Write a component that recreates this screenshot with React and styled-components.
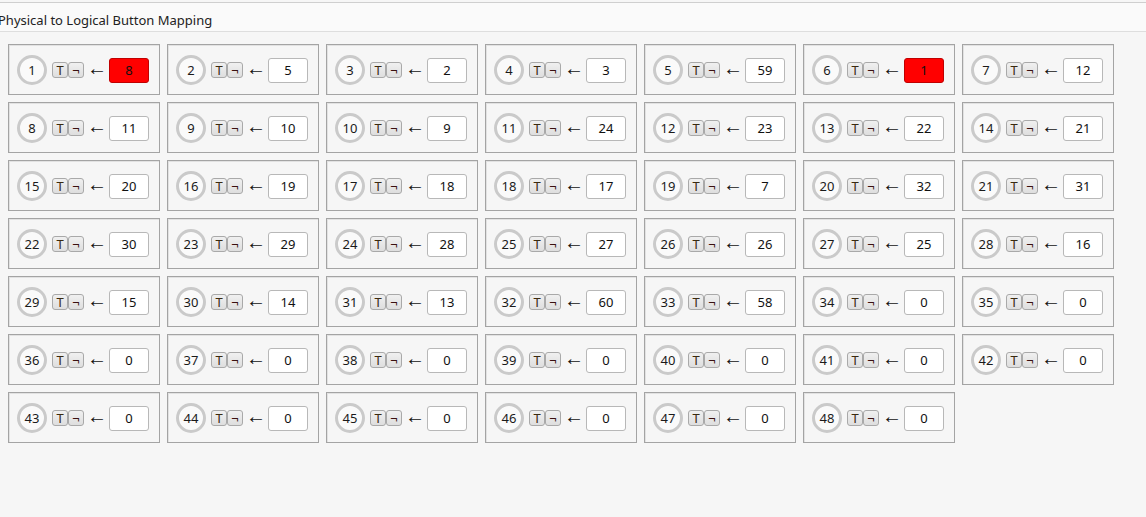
import React from "react";
import styled, { createGlobalStyle } from "styled-components";

const Global = createGlobalStyle`
  html, body { margin: 0; padding: 0; background: #f6f6f6; }
  body { font-family: "Noto Sans", "DejaVu Sans", sans-serif; color: #111; }
`;

const Page = styled.div`
  padding-top: 2px;
`;

const Header = styled.div`
  height: 30px;
  box-sizing: border-box;
  border-top: 1px solid #cfcfcf;
  border-bottom: 1px solid #dedede;
  background: #fafafa;
  display: flex;
  align-items: center;
  padding-top: 5px;
`;

const Title = styled.span`
  font-size: 13px;
  margin-left: -2px;
  color: #222;
`;

const Grid = styled.div`
  display: grid;
  grid-template-columns: repeat(7, 152px);
  gap: 7px;
  padding: 12px 8px;
`;

const Card = styled.div`
  height: 51px;
  box-sizing: border-box;
  border: 1px solid #a4a4a4;
  box-shadow: inset 1px 1px 0 #e2e2e2;
  display: flex;
  align-items: center;
  padding-left: 8px;
  padding-top: 1px;
`;

const Circle = styled.div`
  width: 30px;
  height: 30px;
  box-sizing: border-box;
  border: 3px solid #cacaca;
  border-radius: 50%;
  background: #fafafa;
  display: flex;
  align-items: center;
  justify-content: center;
  font-size: 13px;
  color: #1a1a1a;
  margin-right: 5px;
`;

const Toggles = styled.div`
  display: flex;
  gap: 0;
`;

const ToggleBtn = styled.span`
  width: 16px;
  height: 16px;
  box-sizing: border-box;
  border: 1px solid #a9a9a9;
  border-radius: 3px;
  background: linear-gradient(#f0f0f0, #dedede);
  display: flex;
  align-items: center;
  justify-content: center;
  font-size: 13px;
  line-height: 1;
  color: ${(p) => p.$c};
`;

const Arrow = styled.span`
  font-family: "Liberation Sans", sans-serif;
  font-size: 20px;
  line-height: 1;
  margin: 0 2px 5px 3px;
  color: #111;
`;

const ValueBox = styled.div`
  width: 40px;
  height: 25px;
  box-sizing: border-box;
  border: 1px solid ${(p) => (p.$red ? "#c00000" : "#b8b8b8")};
  border-radius: 3px;
  background: ${(p) => (p.$red ? "#ff0000" : "#ffffff")};
  display: flex;
  align-items: center;
  justify-content: center;
  font-size: 13px;
  color: #111;
`;

const values = [
  8, 5, 2, 3, 59, 1, 12,
  11, 10, 9, 24, 23, 22, 21,
  20, 19, 18, 17, 7, 32, 31,
  30, 29, 28, 27, 26, 25, 16,
  15, 14, 13, 60, 58, 0, 0,
  0, 0, 0, 0, 0, 0, 0,
  0, 0, 0, 0, 0, 0,
];
const red = new Set([1, 6]);

export default function App() {
  return (
    <Page>
      <Global />
      <Header>
        <Title>Physical to Logical Button Mapping</Title>
      </Header>
      <Grid>
        {values.map((v, i) => (
          <Card key={i}>
            <Circle>{i + 1}</Circle>
            <Toggles>
              <ToggleBtn $c="#3a2a10">T</ToggleBtn>
              <ToggleBtn $c="#3a1010">¬</ToggleBtn>
            </Toggles>
            <Arrow>←</Arrow>
            <ValueBox $red={red.has(i + 1)}>{v}</ValueBox>
          </Card>
        ))}
      </Grid>
    </Page>
  );
}
